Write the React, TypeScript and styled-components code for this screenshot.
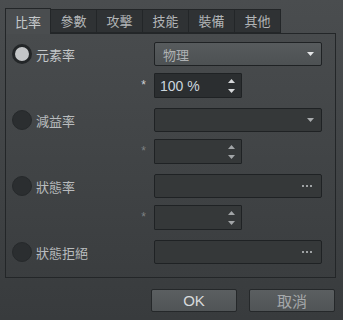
import React from 'react';
import styled, { createGlobalStyle } from 'styled-components';

const GlobalStyle = createGlobalStyle`
    html, body {
        margin: 0;
        padding: 0;
        background: #3f4244;
    }
    * {
        box-sizing: border-box;
    }
`;

const Window = styled.div`
    width: 343px;
    height: 320px;
    padding: 8px 7px 0 5px;
    background: linear-gradient(180deg, #4a4d4f 0%, #414446 50%, #383b3d 100%);
    font-family: "Liberation Sans", "Noto Sans CJK TC", sans-serif;
    font-size: 13px;
    color: #c4c7c9;
    overflow: hidden;
`;

const TabBar = styled.div`
    display: flex;
    align-items: flex-end;
    height: 25px;
`;

const Tab = styled.div<{ $active?: boolean }>`
    width: 46px;
    height: ${(p) => (p.$active ? '26px' : '24px')};
    margin-bottom: ${(p) => (p.$active ? '-1px' : '0')};
    display: flex;
    align-items: center;
    justify-content: center;
    border: 1px solid #232628;
    border-bottom: ${(p) => (p.$active ? 'none' : '1px solid #232628')};
    border-left: ${(p) => (p.$active ? '1px solid #232628' : 'none')};
    background: ${(p) => (p.$active ? '#4a4d4f' : '#2f3234')};
    color: ${(p) => (p.$active ? '#c6c9cb' : '#b2b5b7')};
    position: relative;
    z-index: ${(p) => (p.$active ? 2 : 1)};
    font-size: 13px;
    padding-bottom: 1px;
`;

const Panel = styled.div`
    width: 331px;
    height: 245px;
    border: 1px solid #232628;
    padding: 8px 0 0 6px;
    display: flex;
    flex-direction: column;
    gap: 11px;
`;

const Group = styled.div`
    display: grid;
    grid-template-columns: 142px 168px;
    grid-auto-rows: 24px;
    row-gap: 7px;
`;

const LabelCell = styled.div<{ $dim?: boolean }>`
    display: flex;
    align-items: center;
    gap: 3px;
    color: ${(p) => (p.$dim ? '#b9bcbe' : '#c4c7c9')};
`;

const Radio = styled.span<{ $checked?: boolean }>`
    width: 20px;
    height: 20px;
    border-radius: 50%;
    background: ${(p) => (p.$checked ? '#c4c6c8' : '#2b2e30')};
    border: ${(p) => (p.$checked ? '3px solid #232628' : '1px solid #26292b')};
    margin-right: 1px;
`;

const StarCell = styled.div<{ $dim?: boolean }>`
    display: flex;
    align-items: flex-start;
    justify-content: flex-end;
    padding: 5px 8px 0 0;
    font-size: 12px;
    color: ${(p) => (p.$dim ? '#7d8082' : '#d0d2d4')};
`;

const Field = styled.div<{ $enabled?: boolean }>`
    height: 24px;
    border: 1px solid #1f2224;
    border-radius: 2px;
    background: ${(p) => (p.$enabled ? 'linear-gradient(180deg, #575b5d, #4d5153)' : '#353839')};
    display: flex;
    align-items: center;
    justify-content: space-between;
    padding: 0 7px 0 8px;
    color: #aeb1b3;
    font-size: 13px;
`;

const SpinBox = styled.div<{ $enabled?: boolean }>`
    width: 88px;
    height: 25px;
    border: 1px solid #1f2224;
    border-radius: 1px;
    background: ${(p) => (p.$enabled ? '#2b2e30' : '#353839')};
    display: flex;
    align-items: center;
    justify-content: space-between;
    padding: 0 6px 0 5px;
    color: #ccd6de;
    font-size: 14px;
`;

const Arrows = styled.div`
    display: flex;
    flex-direction: column;
    gap: 6px;
`;

const Footer = styled.div`
    display: flex;
    justify-content: flex-end;
    gap: 12px;
    padding-top: 11px;
    padding-right: 1px;
`;

const Button = styled.div<{ $dim?: boolean }>`
    width: 86px;
    height: 23px;
    border: 1px solid #25282a;
    border-radius: 2px;
    background: linear-gradient(180deg, #5b5f61, #505456);
    display: flex;
    align-items: center;
    justify-content: center;
    color: ${(p) => (p.$dim ? '#a6a9ab' : '#d8dadc')};
    font-size: 15px;
`;

function Triangle({ down, color }: { down?: boolean; color: string }) {
    return (
        <svg width="7" height="4" viewBox="0 0 7 4" style={{ display: 'block' }}>
            <polygon points={down ? '0,0 7,0 3.5,4' : '3.5,0 7,4 0,4'} fill={color} />
        </svg>
    );
}

function Dots() {
    return (
        <svg width="10" height="2" viewBox="0 0 10 2" style={{ display: 'block', marginRight: 2 }}>
            <rect x="0" y="0" width="2" height="2" fill="#9fa2a4" />
            <rect x="4" y="0" width="2" height="2" fill="#9fa2a4" />
            <rect x="8" y="0" width="2" height="2" fill="#9fa2a4" />
        </svg>
    );
}

function Spin({ value, enabled }: { value?: string; enabled?: boolean }) {
    const color = enabled ? '#d6d8da' : '#a2a5a7';
    return (
        <SpinBox $enabled={enabled}>
            <span>{value}</span>
            <Arrows>
                <Triangle color={color} />
                <Triangle down color={color} />
            </Arrows>
        </SpinBox>
    );
}

const tabs = ['比率', '參數', '攻擊', '技能', '裝備', '其他'];

export default function App() {
    return (
        <Window>
            <GlobalStyle />
            <TabBar>
                {tabs.map((t, i) => (
                    <Tab key={t} $active={i === 0}>{t}</Tab>
                ))}
            </TabBar>
            <Panel>
                <Group>
                    <LabelCell><Radio $checked />元素率</LabelCell>
                    <Field $enabled>
                        <span>物理</span>
                        <Triangle down color="#e4e6e8" />
                    </Field>
                    <StarCell>*</StarCell>
                    <Spin value="100 %" enabled />
                </Group>
                <Group>
                    <LabelCell $dim><Radio />減益率</LabelCell>
                    <Field>
                        <span />
                        <Triangle down color="#a9acae" />
                    </Field>
                    <StarCell $dim>*</StarCell>
                    <Spin />
                </Group>
                <Group>
                    <LabelCell $dim><Radio />狀態率</LabelCell>
                    <Field>
                        <span />
                        <Dots />
                    </Field>
                    <StarCell $dim>*</StarCell>
                    <Spin />
                </Group>
                <Group>
                    <LabelCell $dim><Radio />狀態拒絕</LabelCell>
                    <Field>
                        <span />
                        <Dots />
                    </Field>
                </Group>
            </Panel>
            <Footer>
                <Button>OK</Button>
                <Button $dim>取消</Button>
            </Footer>
        </Window>
    );
}
